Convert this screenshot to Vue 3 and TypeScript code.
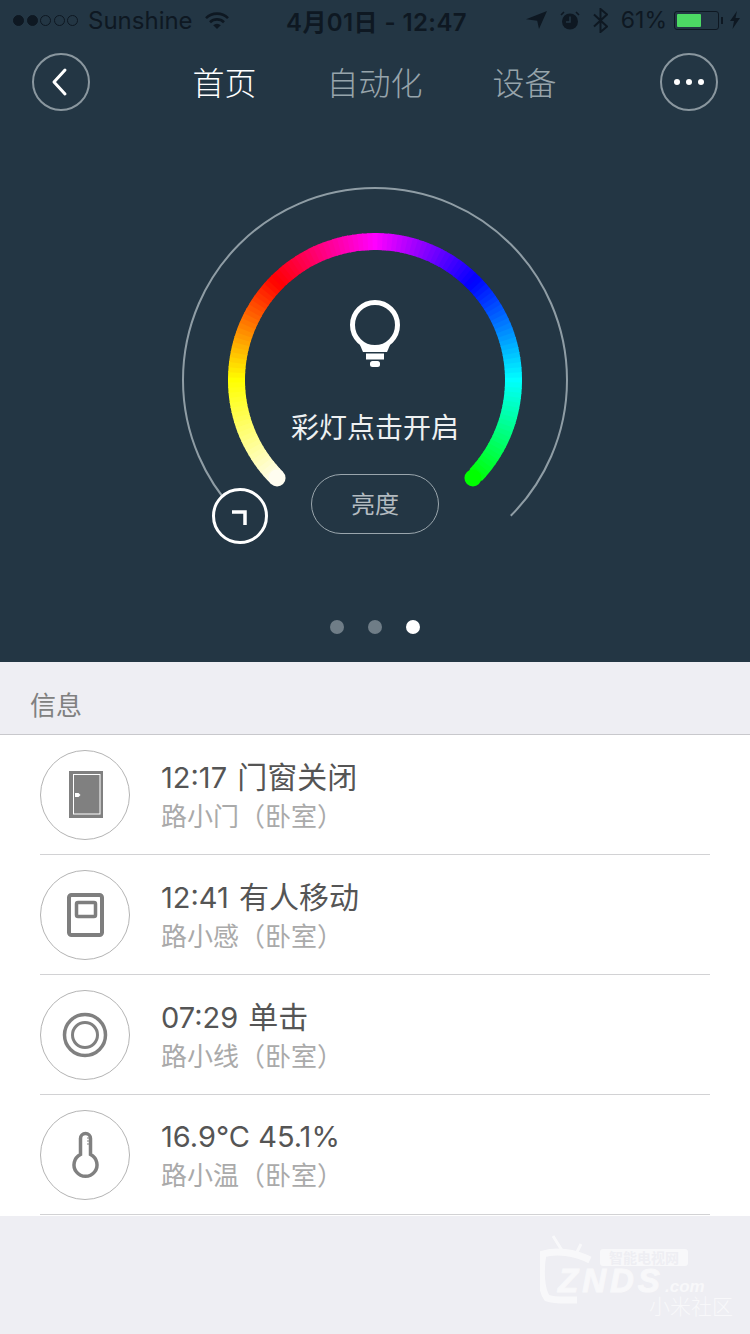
<template>
  <div class="page">
    <section class="hero">
      <div class="status">
        <div class="status-left">
          <span class="signal">
            <i v-for="n in 5" :key="n" :class="{ on: n <= 2 }"></i>
          </span>
          <span class="carrier">Sunshine</span>
          <svg class="wifi" viewBox="0 0 24 17" aria-hidden="true">
            <path d="M1 6.2a15.6 15.6 0 0 1 22 0" fill="none" stroke="currentColor" stroke-width="2.6" />
            <path d="M5 10.2a10 10 0 0 1 14 0" fill="none" stroke="currentColor" stroke-width="2.6" />
            <path d="M8.2 13.2a5.4 5.4 0 0 1 7.6 0L12 17z" fill="currentColor" />
          </svg>
        </div>
        <span class="clock">4月01日 - 12:47</span>
        <div class="status-right">
          <svg class="loc" viewBox="0 0 21 18" aria-hidden="true">
            <path d="M21 0L0 8.2l11.2 1.6L13 18z" fill="currentColor" />
          </svg>
          <svg class="alarm" viewBox="0 0 20 19" aria-hidden="true">
            <circle cx="10" cy="10.5" r="8" fill="currentColor" />
            <path d="M10 5.5v5.5H6" fill="none" stroke="#233644" stroke-width="1.5" />
            <path d="M1 4l3-3M19 4l-3-3" stroke="currentColor" stroke-width="1.6" />
          </svg>
          <svg class="bt" viewBox="0 0 15 25" aria-hidden="true">
            <path d="M1 6.5l13 12-6.5 5.5V1L14 6.5 1 18.500" fill="none" stroke="currentColor" stroke-width="2" />
          </svg>
          <span class="percent">61%</span>
          <span class="battery"><span class="battery-fill" :style="{ width: '61%' }"></span></span>
          <span class="nub"></span>
          <svg class="bolt" viewBox="0 0 10 18" aria-hidden="true">
            <path d="M7 0L0 10h4l-1.500 8L10 7H5.500z" fill="currentColor" />
          </svg>
        </div>
      </div>

      <nav class="nav">
        <button class="round" aria-label="返回">
          <svg viewBox="0 0 22 30" class="chev" aria-hidden="true">
            <path d="M16 3L5 15l11 12" fill="none" stroke="currentColor" stroke-width="3" stroke-linecap="round" stroke-linejoin="round" />
          </svg>
        </button>
        <div class="tabs">
          <span v-for="t in tabs" :key="t" class="tab" :class="{ active: t === '首页' }">{{ t }}</span>
        </div>
        <button class="round" aria-label="更多">
          <span class="more"><i></i><i></i><i></i></span>
        </button>
      </nav>

      <div class="dial">
        <svg class="dial-art" viewBox="0 0 410 390" aria-hidden="true">
          <path :d="arc(-135, 135, 192)" fill="none" stroke="#8f9da5" stroke-width="2" />
          <path
            v-for="s in segments"
            :key="s.a"
            :d="arc(s.a, s.a + 2.4, 138.500)"
            fill="none"
            :stroke="s.color"
            stroke-width="17"
          />
          <circle :cx="capStart.x" :cy="capStart.y" r="8.500" fill="#fffdf0" />
          <circle :cx="capEnd.x" :cy="capEnd.y" r="8.500" fill="#00ff00" />
          <circle cx="70" cy="346" r="26.500" fill="#233644" stroke="#fff" stroke-width="3" />
          <path d="M62 342h13v13" fill="none" stroke="#fff" stroke-width="3.500" />
        </svg>
        <div class="dial-body">
          <svg class="bulb" viewBox="0 0 54 70" aria-hidden="true">
            <circle cx="27" cy="27" r="22.500" fill="none" stroke="#fff" stroke-width="5" />
            <path d="M12 47h30l-3 7H15z" fill="#fff" />
            <rect x="18" y="55.500" width="18" height="6" fill="#fff" />
            <rect x="22" y="63" width="10" height="6" rx="2.500" fill="#fff" />
          </svg>
          <p class="dial-label">彩灯点击开启</p>
          <button class="pill">亮度</button>
        </div>
      </div>

      <div class="pager">
        <i v-for="n in 3" :key="n" :class="{ on: n === 3 }"></i>
      </div>
    </section>

    <h2 class="section-title">信息</h2>
    <ul class="list">
      <li v-for="r in rows" :key="r.sub" class="row">
        <span class="badge">
          <svg viewBox="0 0 90 90" aria-hidden="true">
            <circle cx="45" cy="45" r="44.500" fill="#fff" stroke="#b4b4b4" stroke-width="1" />
            <template v-if="r.icon === 'door'">
              <rect x="29" y="21" width="34" height="47" fill="#808080" />
              <rect x="33.500" y="24.500" width="26.500" height="39.500" fill="none" stroke="#fff" stroke-width="1" />
              <path d="M35 43h3.500l2 2-2 2H35z" fill="#fff" />
            </template>
            <template v-else-if="r.icon === 'motion'">
              <rect x="29" y="25" width="33" height="40" rx="2.500" fill="none" stroke="#7e7e7e" stroke-width="4" />
              <rect x="36.500" y="32.500" width="19" height="14" rx="1.500" fill="none" stroke="#7e7e7e" stroke-width="3.500" />
            </template>
            <template v-else-if="r.icon === 'switch'">
              <circle cx="45" cy="45" r="20.500" fill="none" stroke="#808080" stroke-width="3.500" />
              <circle cx="45" cy="45" r="12.500" fill="none" stroke="#808080" stroke-width="3" />
            </template>
            <template v-else>
              <path d="M40.500 44.500V28.500a5 5 0 0 1 10 0v16a11.500 11.500 0 1 1-10 0z" fill="none" stroke="#808080" stroke-width="3.500" />
              <path d="M47 28h3.500M47 31h3.500M47 34h3.500" stroke="#808080" stroke-width="1" />
            </template>
          </svg>
        </span>
        <div class="row-text">
          <p class="row-title">{{ r.value }} <span v-if="r.event" class="row-event">{{ r.event }}</span></p>
          <p class="row-sub">{{ r.sub }}</p>
        </div>
      </li>
    </ul>

    <div class="watermark" aria-hidden="true">
      <svg class="wm-tv" viewBox="0 0 70 80">
        <path d="M13 2l10 16M41 10l-6 12" stroke="#fff" stroke-width="3" />
        <path d="M50 26C34 18 16 16 3 20c-3 16-2 36 4 44 8 3 18 2 30 2" fill="none" stroke="#fff" stroke-width="7" />
      </svg>
      <span class="wm-pill">智能电视网</span>
      <span class="wm-logo">ZNDS</span>
      <span class="wm-com">.com</span>
      <span class="wm-tag">小米社区</span>
    </div>
  </div>
</template>

<script setup lang="ts">
type Icon = 'door' | 'motion' | 'switch' | 'thermo';
type Rgb = [number, number, number];

const tabs = ['首页', '自动化', '设备'];

const rows: { icon: Icon; value: string; event?: string; sub: string }[] = [
  { icon: 'door', value: '12:17', event: '门窗关闭', sub: '路小门（卧室）' },
  { icon: 'motion', value: '12:41', event: '有人移动', sub: '路小感（卧室）' },
  { icon: 'switch', value: '07:29', event: '单击', sub: '路小线（卧室）' },
  { icon: 'thermo', value: '16.9°C 45.1%', sub: '路小温（卧室）' },
];

// dial centre inside the 410x390 svg
const CX = 205;
const CY = 210;

function point(deg: number, r: number) {
  const rad = (deg * Math.PI) / 180;
  return { x: CX + r * Math.sin(rad), y: CY - r * Math.cos(rad) };
}

function arc(from: number, to: number, r: number) {
  const a = point(from, r);
  const b = point(to, r);
  const large = to - from > 180 ? 1 : 0;
  return `M${a.x} ${a.y}A${r} ${r} 0 ${large} 1 ${b.x} ${b.y}`;
}

const stops: Rgb[] = [
  [255, 253, 240],
  [255, 255, 0],
  [255, 0, 0],
  [255, 0, 255],
  [0, 0, 255],
  [0, 255, 255],
  [0, 255, 0],
];

function colorAt(deg: number) {
  const t = (deg + 135) / 45;
  const i = Math.min(Math.floor(t), stops.length - 2);
  const f = t - i;
  const c = stops[i].map((v, k) => Math.round(v + (stops[i + 1][k] - v) * f));
  return `rgb(${c[0]},${c[1]},${c[2]})`;
}

const segments: { a: number; color: string }[] = [];
for (let a = -135; a < 133; a += 2) {
  segments.push({ a, color: colorAt(a + 1) });
}

const capStart = point(-135, 138.5);
const capEnd = point(135, 138.5);
</script>

<style>
html,
body {
  background: #eeeef3;
}
</style>

<style scoped>
.page {
  position: relative;
  width: 750px;
  min-height: 1334px;
  overflow: hidden;
  background: #eeeef3;
  font-family: Inter, "Noto Sans CJK SC", "Liberation Sans", sans-serif;
}

.hero {
  height: 662px;
  background: #233644;
}

/* status bar */
.status {
  display: grid;
  grid-template-columns: 1fr auto 1fr;
  align-items: center;
  height: 40px;
  padding: 0 10px 0 13px;
  color: #0e1822;
  font-size: 23px;
}
.status-left,
.status-right {
  display: flex;
  align-items: center;
}
.status-right {
  justify-content: flex-end;
}
.signal {
  display: flex;
  gap: 2.500px;
}
.signal i {
  width: 11px;
  height: 11px;
  box-sizing: border-box;
  border: 1px solid #0e1822;
  border-radius: 50%;
}
.signal i.on {
  background: #0e1822;
}
.carrier {
  margin-left: 10px;
  font-size: 24px;
}
.wifi {
  width: 24px;
  height: 17px;
  margin-left: 12px;
}
.clock {
  font-weight: 600;
  font-size: 24px;
  letter-spacing: 0.4px;
}
.loc {
  width: 21px;
  height: 18px;
}
.alarm {
  width: 20px;
  height: 19px;
  margin-left: 13px;
}
.bt {
  width: 15px;
  height: 25px;
  margin-left: 13px;
}
.percent {
  margin-left: 13px;
}
.battery {
  display: block;
  width: 45px;
  height: 19px;
  margin-left: 7px;
  padding: 2px;
  box-sizing: border-box;
  border: 1px solid #0e1822;
  border-radius: 3px;
}
.battery-fill {
  display: block;
  height: 100%;
  background: #4cd964;
  border-radius: 1px;
}
.nub {
  width: 2px;
  height: 7px;
  margin-left: 2px;
  background: #0e1822;
}
.bolt {
  width: 10px;
  height: 18px;
  margin-left: 7px;
}

/* nav */
.nav {
  display: flex;
  align-items: center;
  justify-content: space-between;
  height: 58px;
  margin-top: 13px;
  padding: 0 32px;
}
.round {
  display: flex;
  align-items: center;
  justify-content: center;
  width: 58px;
  height: 58px;
  padding: 0;
  background: none;
  border: 2px solid #8a979f;
  border-radius: 50%;
  color: #fff;
}
.chev {
  width: 22px;
  height: 30px;
  margin-left: -2px;
}
.more {
  display: flex;
  gap: 6px;
}
.more i {
  width: 6px;
  height: 6px;
  border-radius: 50%;
  background: #fff;
}
.tabs {
  display: flex;
  gap: 70px;
  padding-top: 4px;
  margin-left: -1px;
}
.tab {
  font-size: 32px;
  line-height: 44px;
  font-weight: 300;
  color: #97a4ab;
}
.tab.active {
  color: #fff;
}

/* dial */
.dial {
  position: relative;
  width: 410px;
  height: 390px;
  margin: 59px auto 0;
}
.dial-art {
  position: absolute;
  inset: 0;
  width: 410px;
  height: 390px;
}
.dial-body {
  position: relative;
  display: flex;
  flex-direction: column;
  align-items: center;
  padding-top: 128px;
}
.bulb {
  width: 54px;
  height: 70px;
}
.dial-label {
  margin: 40px 0 0;
  font-size: 28px;
  line-height: 40px;
  color: #eef1f2;
}
.pill {
  width: 128px;
  height: 60px;
  margin-top: 26px;
  padding: 0 0 4px;
  background: none;
  border: 1px solid #9aa6ad;
  border-radius: 30px;
  font-family: inherit;
  font-size: 24px;
  color: #b4bcc1;
}

.pager {
  display: flex;
  justify-content: center;
  gap: 24px;
  margin-top: 60px;
}
.pager i {
  width: 14px;
  height: 14px;
  border-radius: 50%;
  background: #6f7d87;
}
.pager i.on {
  background: #fff;
}

/* info list */
.section-title {
  margin: 0;
  height: 72px;
  padding-left: 30px;
  font-size: 26px;
  font-weight: 400;
  line-height: 88px;
  color: #808080;
}
.list {
  margin: 0;
  padding: 0 40px 1px;
  list-style: none;
  background: #fff;
  border-top: 1px solid #c8c8cc;
}
.row {
  display: flex;
  align-items: center;
  gap: 31px;
  height: 119px;
  box-sizing: content-box;
  border-bottom: 1px solid #d2d2d4;
}
.badge {
  display: block;
  width: 90px;
  height: 90px;
}
.badge svg {
  display: block;
  width: 90px;
  height: 90px;
}
.row-text {
  padding-top: 3px;
}
.row-text p {
  margin: 0;
  white-space: pre;
}
.row-title {
  font-size: 29px;
  line-height: 40px;
  color: #555;
}
.row-event {
  margin-left: 2px;
  font-size: 30px;
}
.row-sub {
  font-size: 26px;
  line-height: 38px;
  color: #aaa;
}

/* faint site watermark over the corner */
.watermark {
  position: absolute;
  left: 530px;
  top: 1230px;
  width: 220px;
  height: 100px;
  opacity: 0.6;
  color: #fff;
}
.wm-tv {
  position: absolute;
  left: 10px;
  top: 4px;
  width: 70px;
  height: 80px;
}
.wm-pill {
  position: absolute;
  left: 70px;
  top: 19px;
  width: 88px;
  height: 17px;
  background: #fff;
  border-radius: 3px;
  color: #eeeef3;
  font-size: 14px;
  line-height: 17px;
  font-weight: 700;
  text-align: center;
}
.wm-logo {
  position: absolute;
  left: 28px;
  top: 38px;
  font-family: "Liberation Sans", sans-serif;
  font-style: italic;
  font-weight: 700;
  font-size: 33px;
  line-height: 26px;
  letter-spacing: 4px;
  -webkit-text-stroke: 1px #fff;
}
.wm-com {
  position: absolute;
  left: 135px;
  top: 50px;
  font-family: "Liberation Sans", sans-serif;
  font-style: italic;
  font-weight: 700;
  font-size: 17px;
  line-height: 14px;
}
.wm-tag {
  position: absolute;
  left: 119px;
  top: 66px;
  font-size: 21px;
  line-height: 22px;
  font-weight: 300;
}
</style>
